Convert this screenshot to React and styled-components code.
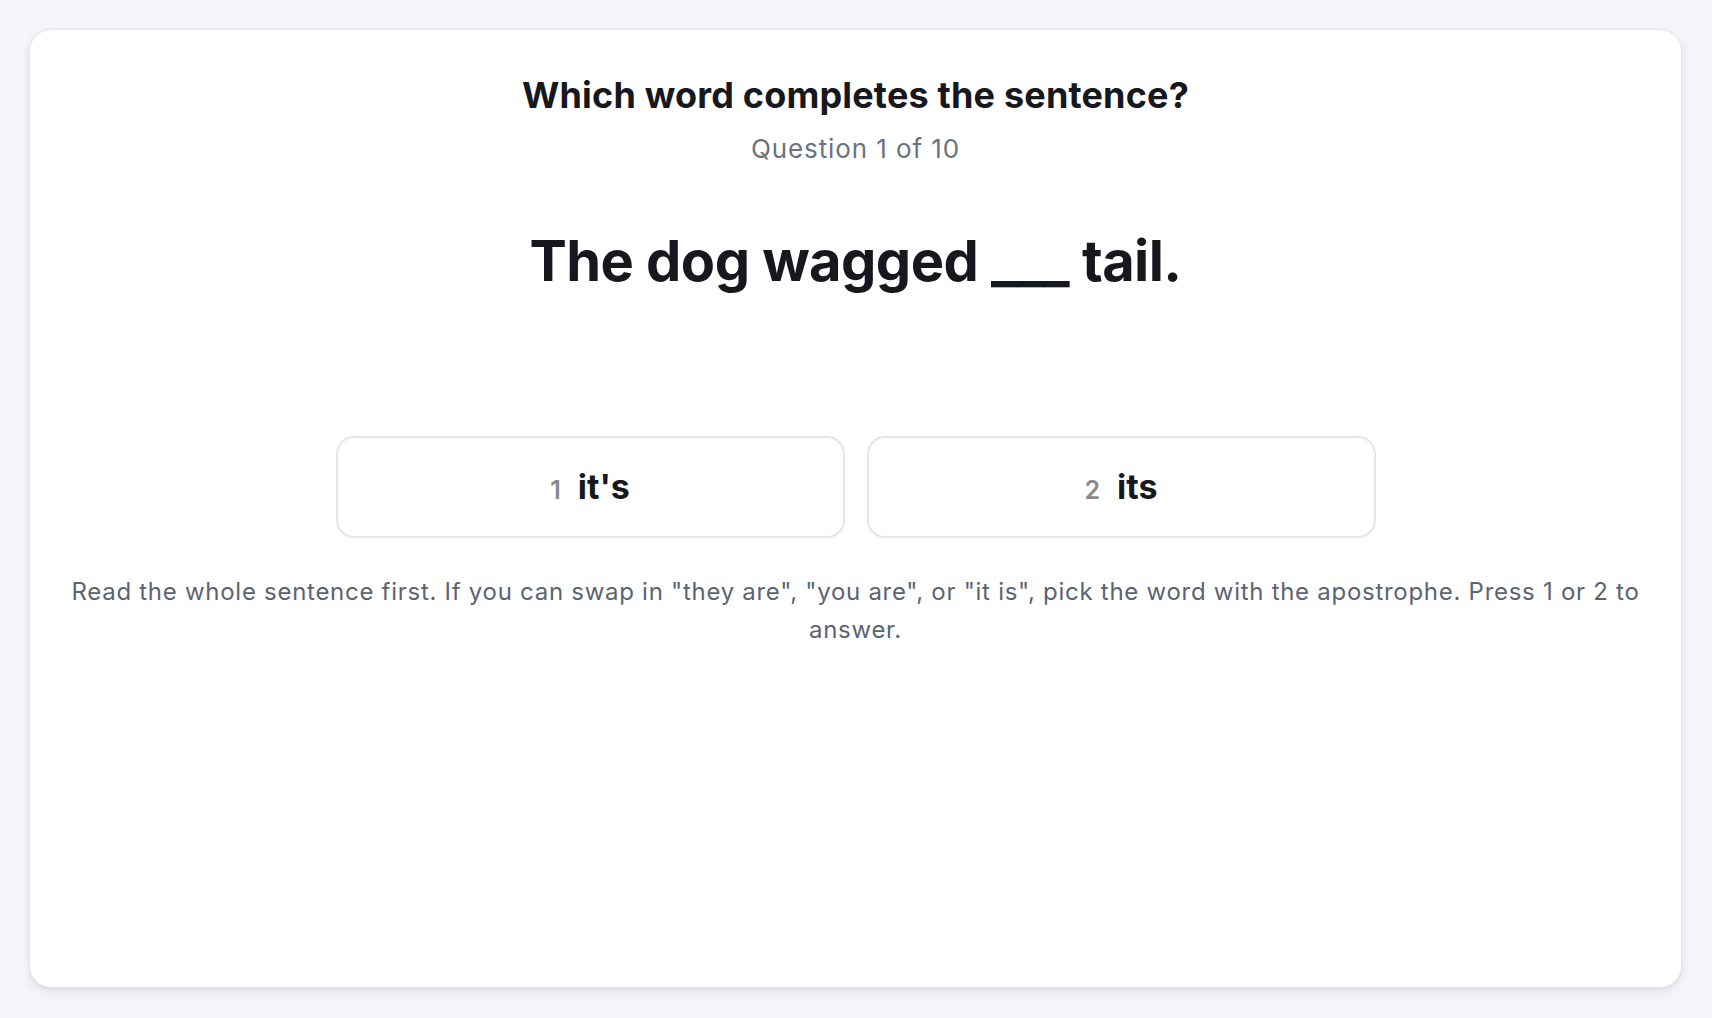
import React, { useEffect, useState } from 'react'
import styled, { createGlobalStyle } from 'styled-components'

const GlobalStyle = createGlobalStyle`
  * { box-sizing: border-box; }
  html, body {
    margin: 0;
    padding: 0;
    background: #f4f5f8;
    font-family: Inter, "Noto Sans", "Liberation Sans", sans-serif;
    color: #16181d;
  }
`

const Page = styled.div`
  min-height: 100vh;
  padding: 29px 30px 30px 29px;
  display: flex;
`

const Card = styled.main`
  flex: 1;
  background: #ffffff;
  border: 1px solid #e4e6eb;
  border-radius: 22px;
  box-shadow: 0 4px 10px rgba(30, 40, 70, 0.09), 0 1px 2px rgba(30, 40, 70, 0.06);
  padding: 44px 40px;
  display: flex;
  flex-direction: column;
  align-items: center;
  text-align: center;
`

const Title = styled.h1`
  margin: 0;
  font-size: 36px;
  line-height: 43px;
  font-weight: 700;
  letter-spacing: 0.005em;
`

const Progress = styled.p`
  margin: 14px 0 0;
  font-size: 26px;
  line-height: 36px;
  letter-spacing: 0.035em;
  color: #6b7280;
`

const Sentence = styled.h2`
  margin: 61px 0 0;
  font-size: 56px;
  line-height: 67px;
  font-weight: 700;
  letter-spacing: -0.01em;
`

const Choices = styled.div`
  margin-top: 141px;
  width: 1040px;
  display: grid;
  grid-template-columns: 1fr 1fr;
  gap: 22px;
`

const Choice = styled.button`
  height: 102px;
  background: #ffffff;
  border: 2px solid #e4e6eb;
  border-radius: 18px;
  display: flex;
  align-items: baseline;
  justify-content: center;
  padding-top: 28px;
  gap: 17px;
  font-family: inherit;
  cursor: pointer;
  color: #16181d;

  &:hover {
    border-color: #cfd3da;
  }
`

const Key = styled.span`
  font-size: 25px;
  font-weight: 600;
  color: #8a8a8a;
`

const Word = styled.span`
  font-size: 34px;
  font-weight: 700;
`

const Hint = styled.p`
  margin: 35px 0 0;
  font-size: 24px;
  line-height: 38px;
  letter-spacing: 0.03em;
  color: #5b6472;
`

const options = ["it's", 'its']

export default function App() {
  const [picked, setPicked] = useState(null)

  useEffect(() => {
    const onKey = (e) => {
      if (e.key === '1') setPicked(0)
      if (e.key === '2') setPicked(1)
    }
    window.addEventListener('keydown', onKey)
    return () => window.removeEventListener('keydown', onKey)
  }, [])

  return (
    <>
      <GlobalStyle />
      <Page>
        <Card>
          <Title>Which word completes the sentence?</Title>
          <Progress>Question 1 of 10</Progress>
          <Sentence>The dog wagged ___ tail.</Sentence>
          <Choices>
            {options.map((word, i) => (
              <Choice key={word} onClick={() => setPicked(i)} aria-pressed={picked === i}>
                <Key>{i + 1}</Key>
                <Word>{word}</Word>
              </Choice>
            ))}
          </Choices>
          <Hint>
            Read the whole sentence first. If you can swap in "they are", "you are", or "it is", pick the word with the apostrophe. Press 1 or 2 to answer.
          </Hint>
        </Card>
      </Page>
    </>
  )
}
